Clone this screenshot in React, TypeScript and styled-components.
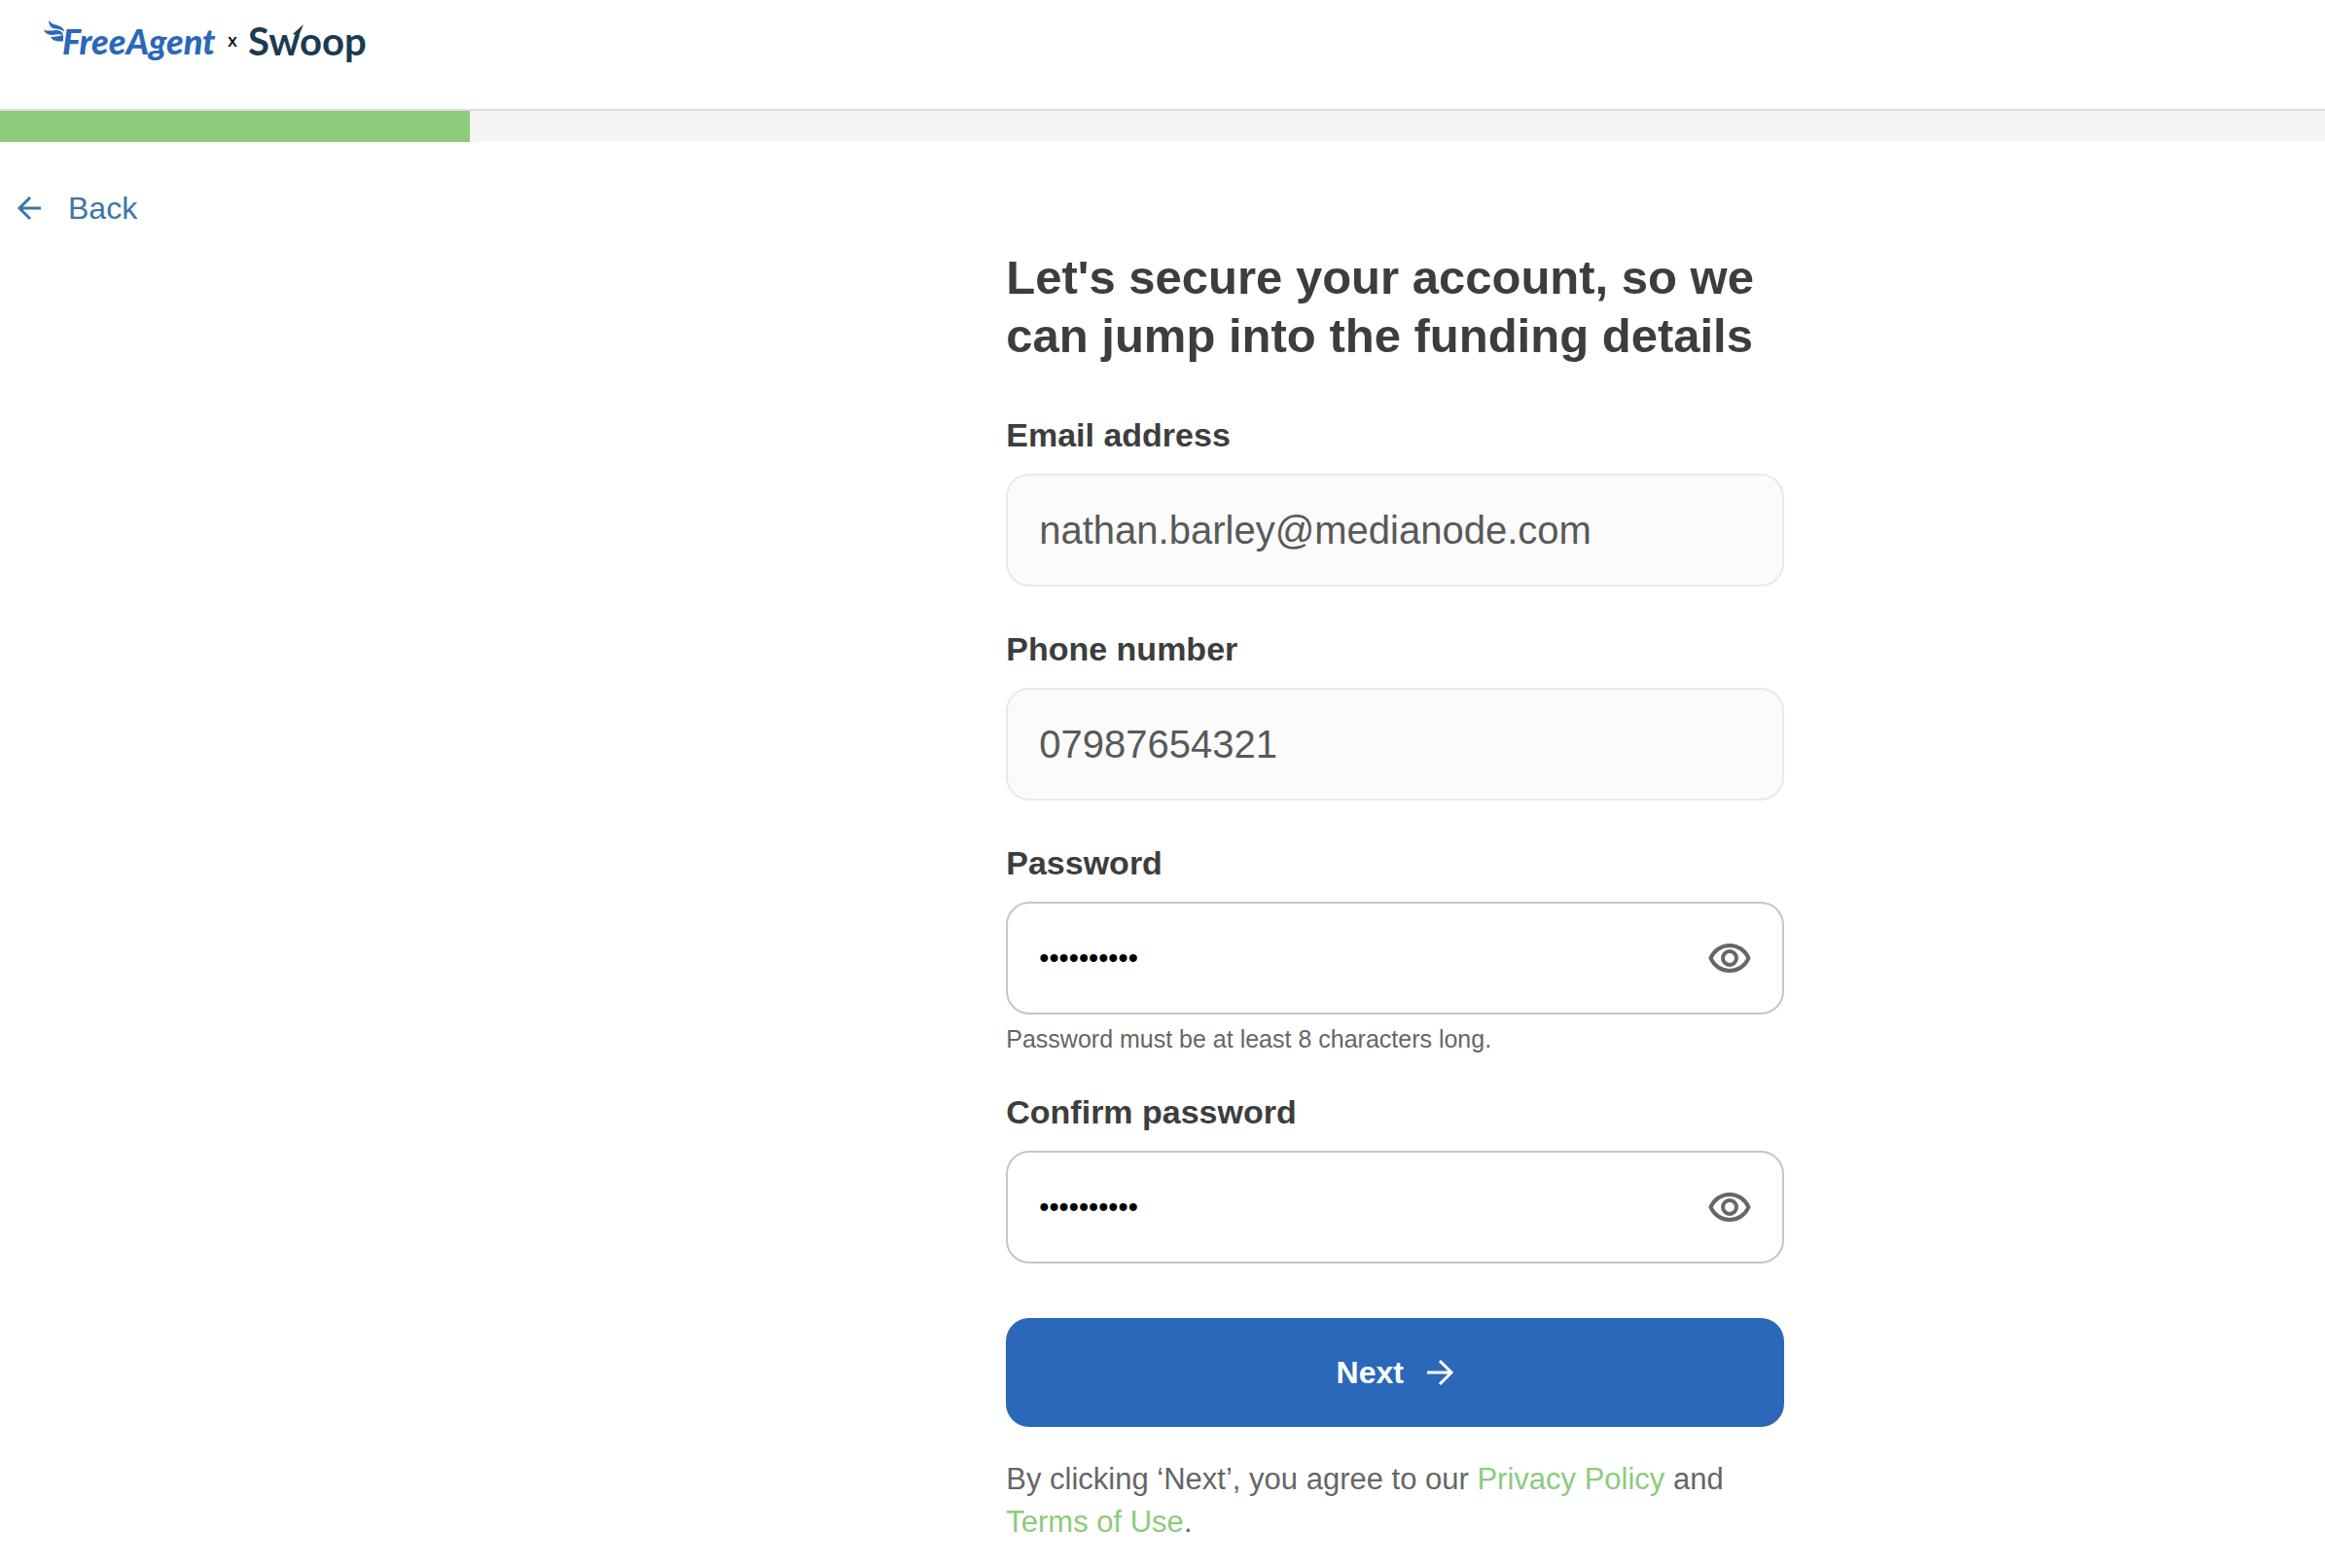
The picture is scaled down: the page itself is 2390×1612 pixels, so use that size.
import React, { useState } from "react";
import styled, { createGlobalStyle } from "styled-components";

const colors = {
  text: "#3d3d3d",
  muted: "#666666",
  link: "#3b76aa",
  green: "#8dcb7b",
  blue: "#2b68b9",
  navy: "#1c3a52",
};

const GlobalStyle = createGlobalStyle`
  *, *::before, *::after { box-sizing: border-box; }
  body {
    margin: 0;
    background: #ffffff;
    color: ${colors.text};
    font-family: "Liberation Sans", Arial, Helvetica, sans-serif;
  }
`;

const Header = styled.header`
  display: flex;
  align-items: flex-start;
  height: 114px;
  padding: 0 44px;
  border-bottom: 2px solid #dddddd;
`;

const Logos = styled.svg`
  display: block;
  width: 340px;
  height: 90px;
`;

const FreeAgentWord = styled.text`
  font: italic 900 36px Lato, sans-serif;
  fill: ${colors.blue};
`;

const Times = styled.text`
  font: 600 18px "Open Sans", sans-serif;
  fill: #111111;
`;

const SwoopWord = styled.text`
  font: 700 40px Lato, sans-serif;
  fill: ${colors.navy};
`;

const ProgressTrack = styled.div`
  height: 32px;
  background: #f5f5f5;
`;

const ProgressFill = styled.div`
  height: 100%;
  background: ${colors.green};
`;

const Main = styled.main`
  padding: 50px 0 32px;
`;

const BackLink = styled.a`
  display: inline-flex;
  align-items: center;
  gap: 26px;
  margin-left: 16px;
  color: ${colors.link};
  font-size: 32px;
  line-height: 36px;
  text-decoration: none;
`;

const Columns = styled.div`
  display: grid;
  grid-template-columns: 67fr minmax(0, 800px) 36fr;
  margin-top: 23px;
`;

const Form = styled.form`
  grid-column: 2;
  display: flex;
  flex-direction: column;
`;

const Title = styled.h1`
  margin: 0 0 50px;
  font-size: 49px;
  line-height: 60px;
  font-weight: 700;
`;

const Fields = styled.div`
  display: flex;
  flex-direction: column;
  gap: 42px;
`;

const FieldGroup = styled.div`
  display: flex;
  flex-direction: column;
`;

const Label = styled.label`
  margin-bottom: 18px;
  font-size: 34px;
  line-height: 44px;
  font-weight: 700;
`;

const Box = styled.div<{ $locked?: boolean }>`
  display: flex;
  align-items: center;
  height: 116px;
  padding: 0 32px;
  border: 2px solid ${(p) => (p.$locked ? "#e9e9e9" : "#c6c6c6")};
  border-radius: 24px;
  background: ${(p) => (p.$locked ? "#fbfbfb" : "#ffffff")};
`;

const Input = styled.input`
  flex: 1;
  min-width: 0;
  height: 100%;
  padding: 0;
  border: 0;
  outline: 0;
  background: transparent;
  color: #595959;
  font-family: inherit;
  font-size: 40px;

  &[type="password"] {
    color: #000000;
    font-size: 29px;
  }
`;

const IconButton = styled.button`
  display: flex;
  padding: 0;
  border: 0;
  background: none;
  color: ${colors.muted};
  cursor: pointer;
`;

const Hint = styled.p`
  margin: 14px 0 0;
  color: ${colors.muted};
  font-size: 25px;
  line-height: 22px;
`;

const NextButton = styled.button`
  display: flex;
  align-items: center;
  justify-content: center;
  gap: 24px;
  height: 112px;
  margin-top: 56px;
  padding: 0 32px;
  border: 0;
  border-radius: 24px;
  background: ${colors.blue};
  color: #ffffff;
  font-family: inherit;
  font-size: 32px;
  font-weight: 700;
  cursor: pointer;
`;

const Terms = styled.p`
  margin: 32px 0 0;
  color: ${colors.muted};
  font-size: 31px;
  line-height: 44px;

  a {
    color: ${colors.green};
    text-decoration: none;
  }
`;

function BrandLogos() {
  return (
    <Logos viewBox="0 0 340 90" role="img" aria-label="FreeAgent x Swoop">
      <g fill={colors.blue}>
        <path d="M6 21 Q9 25 15 26 Q22 28 22 32.500 Q18 29.500 12 29.500 Q6 28 6 21Z" />
        <path d="M1 31 Q6 32 13 31 Q20 31 21 36 Q16 34.500 10 36 Q3 36 1 31Z" />
        <path d="M8 38 Q14 38 21 36 L21 42.500 L16 42.500 Q10 42 8 38Z" />
      </g>
      <FreeAgentWord x="20" y="56">FreeAgent</FreeAgentWord>
      <Times x="190" y="48">x</Times>
      <SwoopWord x="211" y="57">Swoop</SwoopWord>
      <path d="M257 35 L268 25 L263 37 Z" fill={colors.navy} />
    </Logos>
  );
}

function ArrowIcon({ back = false, size }: { back?: boolean; size: number }) {
  return (
    <svg width={size} height={size} viewBox="0 0 28 28" fill="none" stroke="currentColor" strokeWidth="3" strokeLinejoin="miter" aria-hidden="true">
      <path d={back ? "M26 14H4M15 3L4 14L15 25" : "M0 14H25M13 2L25 14L13 26"} />
    </svg>
  );
}

function EyeIcon() {
  return (
    <svg width="44" height="32" viewBox="0 0 44 32" fill="none" stroke="currentColor" strokeWidth="4" aria-hidden="true">
      <path d="M2.500 16C6 8 13.500 3 22 3S38 8 41.500 16C38 24 30.500 29 22 29S6 24 2.500 16Z" />
      <circle cx="22" cy="16" r="7" />
    </svg>
  );
}

function LockedField(props: { id: string; label: string; type: string; value: string }) {
  return (
    <FieldGroup>
      <Label htmlFor={props.id}>{props.label}</Label>
      <Box $locked>
        <Input id={props.id} type={props.type} value={props.value} readOnly />
      </Box>
    </FieldGroup>
  );
}

function PasswordField({ id, label, hint }: { id: string; label: string; hint?: string }) {
  const [visible, setVisible] = useState(false);
  return (
    <FieldGroup>
      <Label htmlFor={id}>{label}</Label>
      <Box>
        <Input id={id} type={visible ? "text" : "password"} defaultValue="medianode1" autoComplete="new-password" />
        <IconButton type="button" aria-label="Show password" onClick={() => setVisible(!visible)}>
          <EyeIcon />
        </IconButton>
      </Box>
      {hint && <Hint>{hint}</Hint>}
    </FieldGroup>
  );
}

export default function App() {
  const progress = 20.2;
  return (
    <>
      <GlobalStyle />
      <Header>
        <BrandLogos />
      </Header>
      <ProgressTrack role="progressbar" aria-label="Application progress" aria-valuenow={progress}>
        <ProgressFill style={{ width: `${progress}%` }} />
      </ProgressTrack>
      <Main>
        <BackLink href="#back">
          <ArrowIcon back size={28} />
          Back
        </BackLink>
        <Columns>
          <Form onSubmit={(e) => e.preventDefault()}>
            <Title>Let's secure your account, so we can jump into the funding details</Title>
            <Fields>
              <LockedField id="email" label="Email address" type="email" value="nathan.barley@medianode.com" />
              <LockedField id="phone" label="Phone number" type="tel" value="07987654321" />
              <PasswordField id="password" label="Password" hint="Password must be at least 8 characters long." />
              <PasswordField id="confirm" label="Confirm password" />
            </Fields>
            <NextButton type="submit">
              Next
              <ArrowIcon size={28} />
            </NextButton>
            <Terms>
              By clicking ‘Next’, you agree to our <a href="#privacy">Privacy Policy</a> and{" "}
              <a href="#terms">Terms of Use</a>.
            </Terms>
          </Form>
        </Columns>
      </Main>
    </>
  );
}
